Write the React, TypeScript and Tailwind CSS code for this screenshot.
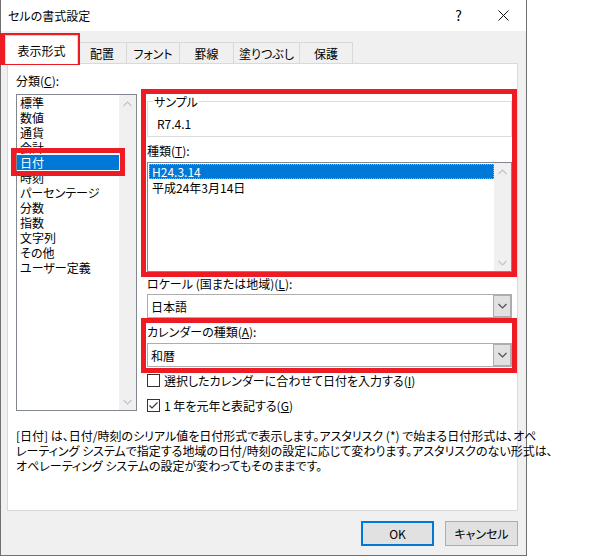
import type { ReactNode } from "react";

const categories = [
  "標準",
  "数値",
  "通貨",
  "会計",
  "日付",
  "時刻",
  "パーセンテージ",
  "分数",
  "指数",
  "文字列",
  "その他",
  "ユーザー定義",
];

const tabs = [
  { label: "配置", w: "w-[49px]" },
  { label: "フォント", w: "w-[53px]" },
  { label: "罫線", w: "w-[54px]" },
  { label: "塗りつぶし", w: "w-[66px]" },
  { label: "保護", w: "w-[53px]" },
];

function Chevron({ up, color = "#c4c4c4" }: { up?: boolean; color?: string }) {
  return (
    <svg width="9" height="6" viewBox="0 0 9 6" fill="none">
      <polyline
        points={up ? "0.5,5 4.5,1 8.5,5" : "0.5,1 4.5,5 8.5,1"}
        stroke={color}
        strokeWidth="1.2"
      />
    </svg>
  );
}

function ScrollBar() {
  return (
    <div className="flex w-[17px] flex-col justify-between bg-[#f0f0f0]">
      <div className="flex h-[17px] items-center justify-center">
        <Chevron up />
      </div>
      <div className="flex h-[17px] items-center justify-center">
        <Chevron />
      </div>
    </div>
  );
}

function Combo({ value }: { value: string }) {
  return (
    <div className="flex h-[24px] border border-[#adadad] bg-white">
      <div className="flex flex-1 items-center pl-[3px]">{value}</div>
      <div className="flex w-[18px] items-center justify-center border border-[#adadad] bg-[#e1e1e1]">
        <Chevron color="#505050" />
      </div>
    </div>
  );
}

function Check({ checked, children }: { checked?: boolean; children: ReactNode }) {
  return (
    <div className="flex h-[15px] items-center gap-[4px]">
      <div className="flex h-[13px] w-[13px] items-center justify-center border border-[#333333] bg-white">
        {checked && (
          <svg width="11" height="11" viewBox="0 0 11 11" fill="none">
            <polyline points="1.5,5.5 4,8 9.5,2.5" stroke="#333333" strokeWidth="1.1" />
          </svg>
        )}
      </div>
      <span>{children}</span>
    </div>
  );
}

export default function App() {
  return (
    <div className="relative h-[556px] w-[600px] overflow-hidden bg-white font-['Noto_Sans_CJK_JP','Noto_Sans',sans-serif] text-[12px] leading-[15px] text-black [font-feature-settings:'palt']">
      <div className="flex h-[556px] w-[527px] flex-col border-x border-b border-[#707070] bg-[#f0f0f0]">
        {/* title bar */}
        <div className="flex h-[31px] items-center bg-white">
          <span className="pl-[7px]">セルの書式設定</span>
          <div className="ml-auto flex h-full">
            <div className="flex w-[45px] items-center justify-center text-[14px]">?</div>
            <div className="flex w-[45px] items-center justify-center">
              <svg width="11" height="11" viewBox="0 0 11 11">
                <path d="M0.5 0.5 L10.5 10.5 M10.5 0.5 L0.5 10.5" stroke="#111" strokeWidth="1" />
              </svg>
            </div>
          </div>
        </div>

        <div className="flex flex-1 flex-col pt-[4px]">
          {/* tabs */}
          <div className="flex h-[28px] items-end pl-[4px]">
            <div className="relative z-10 mb-[-1px] flex h-[29px] w-[73px] items-center justify-center border border-b-0 border-[#d9d9d9] bg-white">
              表示形式
            </div>
            {tabs.map((t) => (
              <div
                key={t.label}
                className={`flex h-[21px] items-center justify-center border-t border-r border-[#d9d9d9] ${t.w}`}
              >
                {t.label}
              </div>
            ))}
          </div>

          {/* panel */}
          <div className="ml-[6px] h-[448px] w-[511px] border border-[#d9d9d9] bg-white pl-[8px] pt-[9px]">
            <div className="flex gap-[10px]">
              <div className="flex w-[121px] flex-col">
                <div>
                  分類(<span className="underline">C</span>):
                </div>
                <div className="mt-[6px] flex h-[317px] border border-[#828790] bg-white">
                  <div className="flex-1">
                    {categories.map((c) => (
                      <div
                        key={c}
                        className={`h-[15px] pl-[3px] ${c === "日付" ? "bg-[#0078d7] text-white" : ""}`}
                      >
                        {c}
                      </div>
                    ))}
                  </div>
                  <ScrollBar />
                </div>
              </div>

              <div className="flex w-[365px] flex-col">
                <div className="relative mt-[28px] h-[36px] border border-[#dcdcdc] pl-[9px] pt-[14px]">
                  <span className="absolute left-[5px] top-[-8px] bg-white px-[1px]">サンプル</span>
                  R7.4.1
                </div>
                <div className="mt-[6px]">
                  種類(<span className="underline">T</span>):
                </div>
                <div className="mt-[4px] flex h-[110px] border border-[#828790] bg-white">
                  <div className="flex-1 pl-[1px] pt-[1px]">
                    <div className="h-[15px] bg-[#0078d7] pl-[3px] text-white outline-1 outline-offset-[-1px] outline-dotted outline-[#d9a441]">
                      H24.3.14
                    </div>
                    <div className="h-[16px] pl-[3px] pt-[1px]">平成24年3月14日</div>
                  </div>
                  <ScrollBar />
                </div>
                <div className="mt-[4px]">
                  ロケール (国または地域)(<span className="underline">L</span>):
                </div>
                <div className="mt-[3px]">
                  <Combo value="日本語" />
                </div>
                <div className="mt-[6px]">
                  カレンダーの種類(<span className="underline">A</span>):
                </div>
                <div className="mt-[4px]">
                  <Combo value="和暦" />
                </div>
                <div className="mt-[6px]">
                  <Check>
                    選択したカレンダーに合わせて日付を入力する(<span className="underline">I</span>)
                  </Check>
                </div>
                <div className="mt-[10px]">
                  <Check checked>
                    1 年を元年と表記する(<span className="underline">G</span>)
                  </Check>
                </div>
              </div>
            </div>

            <div className="mt-[15px] whitespace-nowrap">
              <div>[日付] は、日付/時刻のシリアル値を日付形式で表示します。アスタリスク (*) で始まる日付形式は、オペ</div>
              <div>レーティング システムで指定する地域の日付/時刻の設定に応じて変わります。アスタリスクのない形式は、</div>
              <div>オペレーティング システムの設定が変わってもそのままです。</div>
            </div>
          </div>

          {/* buttons */}
          <div className="mt-[10px] flex justify-end gap-[11px] pr-[8px]">
            <button className="flex h-[25px] w-[73px] items-center justify-center border-2 border-[#0078d7] bg-[#e1e1e1]">
              OK
            </button>
            <button className="flex h-[25px] w-[73px] items-center justify-center border border-[#adadad] bg-[#e1e1e1]">
              キャンセル
            </button>
          </div>
        </div>
      </div>

      {/* red annotation boxes */}
      <div className="pointer-events-none absolute left-0 top-[33px] h-[32px] w-[80px] border-[5px] border-[#ed1c24]" />
      <div className="pointer-events-none absolute left-[11px] top-[148px] h-[28px] w-[114px] border-[5px] border-[#ed1c24]" />
      <div className="pointer-events-none absolute left-[141px] top-[89px] h-[188px] w-[376px] border-[5px] border-[#ed1c24]" />
      <div className="pointer-events-none absolute left-[141px] top-[318px] h-[55px] w-[376px] border-[5px] border-[#ed1c24]" />
    </div>
  );
}
